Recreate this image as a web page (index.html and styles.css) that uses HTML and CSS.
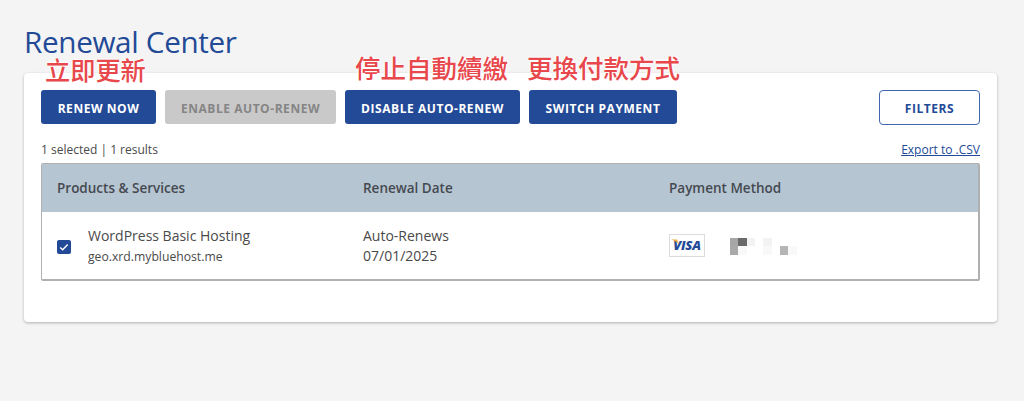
FILE: index.html
```html
<!DOCTYPE html>
<html lang="zh-Hant">
<head>
<meta charset="utf-8">
<title>Renewal Center</title>
<link rel="stylesheet" href="styles.css">
</head>
<body>
<main class="page">
  <h1 class="title">Renewal Center</h1>
  <section class="card">
    <span class="note note-renew">立即更新</span>
    <span class="note note-disable">停止自動續繳</span>
    <span class="note note-switch">更換付款方式</span>
    <div class="toolbar">
      <button class="btn btn-renew">RENEW NOW</button>
      <button class="btn btn-enable">ENABLE AUTO-RENEW</button>
      <button class="btn btn-disable">DISABLE AUTO-RENEW</button>
      <button class="btn btn-switch">SWITCH PAYMENT</button>
      <button class="btn btn-filters">FILTERS</button>
    </div>
    <div class="status">
      <span>1 selected | 1 results</span>
      <a class="export" href="#">Export to .CSV</a>
    </div>
    <div class="table">
      <div class="row head">
        <div class="col col-a">Products &amp; Services</div>
        <div class="col col-b">Renewal Date</div>
        <div class="col col-c">Payment Method</div>
      </div>
      <div class="row body">
        <div class="col col-a product">
          <span class="check">
            <svg viewBox="0 0 14 14" width="14" height="14"><path d="M3.2 7.4l2.5 2.4 5-5.4" fill="none" stroke="#fff" stroke-width="1.4"/></svg>
          </span>
          <div>
            <div class="name">WordPress Basic Hosting</div>
            <div class="domain">geo.xrd.mybluehost.me</div>
          </div>
        </div>
        <div class="col col-b dates">
          <div>Auto-Renews</div>
          <div>07/01/2025</div>
        </div>
        <div class="col col-c pay">
          <span class="visa"><svg class="visa-flag" viewBox="0 0 8 5" width="8" height="5"><path d="M0 0.5L6 0.5L8 5C6 3 3 1.5 0 0.5Z" fill="#e9a93a"/></svg>VISA</span>
          <div class="blur">
            <i class="p1"></i><i class="p3"></i><i class="p2"></i><i class="p0"></i><i class="p2"></i><i class="p0"></i><i class="p0"></i><i class="p0"></i>
            <i class="p4"></i><i class="p6"></i><i class="p0"></i><i class="p0"></i><i class="p6"></i><i class="p0"></i><i class="p5"></i><i class="p6"></i>
          </div>
        </div>
      </div>
    </div>
  </section>
</main>
</body>
</html>
```
FILE: styles.css
```css
* { box-sizing: border-box; }
html, body { margin: 0; height: 401px; overflow: hidden; }
body {
  background: #f4f4f4;
  font-family: "Open Sans", "Noto Sans CJK TC", sans-serif;
  color: #4a4a4a;
}
.page { padding: 27px 27px 0 24px; }
.title {
  margin: 0;
  height: 46px;
  font-size: 29.7px;
  line-height: 30px;
  font-weight: 400;
  letter-spacing: -0.35px;
  color: #234a97;
}
.card {
  position: relative;
  height: 249px;
  padding: 17px 17px 0;
  background: #fff;
  border-radius: 4px;
  box-shadow: 0 1px 3px rgba(0, 0, 0, .28);
}
.note {
  position: absolute;
  top: -16px;
  font-family: "Noto Sans CJK TC", sans-serif;
  font-size: 25.5px;
  line-height: 24px;
  font-weight: 500;
  color: #e8474c;
  text-shadow: 0 0 3px #fff, 0 0 3px #fff, 0 0 2px #fff;
  white-space: nowrap;
}
.note-renew { left: 21px; font-size: 25.2px; }
.note-disable { left: 331px; top: -18px; }
.note-switch { left: 503px; top: -18px; }
.toolbar { display: flex; align-items: flex-start; height: 34px; }
.btn {
  height: 34px;
  padding: 2px 0 0;
  border: 0;
  border-radius: 3px;
  background: #234a97;
  color: #fff;
  font-family: inherit;
  font-size: 12px;
  font-weight: 700;
  letter-spacing: 0.55px;
}
.btn-renew { width: 115px; margin-right: 9px; }
.btn-enable { width: 171px; margin-right: 9px; background: #c9c9c9; color: #858585; }
.btn-disable { width: 175px; margin-right: 9px; }
.btn-switch { width: 148px; }
.btn-filters {
  width: 101px;
  height: 35px;
  margin-left: auto;
  background: #fff;
  color: #234a97;
  border: 1px solid #3f66ae;
  border-radius: 4px;
}
.status {
  display: flex;
  justify-content: space-between;
  align-items: center;
  height: 18px;
  margin-top: 17px;
  font-size: 12px;
  line-height: 18px;
}
.export { color: #234a97; }
.table {
  margin-top: 4px;
  height: 118px;
  border: 1px solid #b0b0b0;
  border-width: 1px 2px 2px 1px;
  border-radius: 2px;
  overflow: hidden;
}
.row { display: flex; }
.head {
  height: 48px;
  align-items: center;
  background: #b6c5d2;
  font-size: 13.5px;
  font-weight: 600;
  color: #454a50;
}
.body { height: 67px; padding-top: 1px; align-items: center; font-size: 14px; background: #fff; }
.col-a { width: 321px; padding-left: 15px; }
.col-b { width: 306px; }
.col-c { flex: 1; }
.product { display: flex; align-items: center; gap: 17px; }
.check {
  display: flex;
  align-items: center;
  justify-content: center;
  width: 14px;
  height: 14px;
  margin-top: 2px;
  border-radius: 2px;
  background: #234a97;
}
.name { font-size: 14px; line-height: 20px; }
.domain { margin-top: 1px; font-size: 12.2px; line-height: 20px; }
.dates { line-height: 20px; }
.pay { display: flex; align-items: center; gap: 25px; }
.visa {
  position: relative;
  display: block;
  width: 36px;
  height: 23px;
  margin-top: -1px;
  border: 1px solid #dcdcdc;
  font-size: 13px;
  font-weight: 800;
  font-style: italic;
  line-height: 21px;
  text-align: center;
  letter-spacing: -.2px;
  color: #234a97;
}
.visa-flag {
  position: absolute;
  left: 1px;
  top: 4px;
}
.blur {
  display: grid;
  grid-template-columns: repeat(8, 8.33px);
  grid-auto-rows: 8.5px;
  margin-top: 0;
}
.p0 { background: #fff; }
.p1 { background: #a6a6a6; }
.p2 { background: #f3f3f3; }
.p3 { background: #6a6a6a; }
.p4 { background: #a9a9a9; }
.p5 { background: #b5b5b5; }
.p6 { background: #f9f9f9; }
```
